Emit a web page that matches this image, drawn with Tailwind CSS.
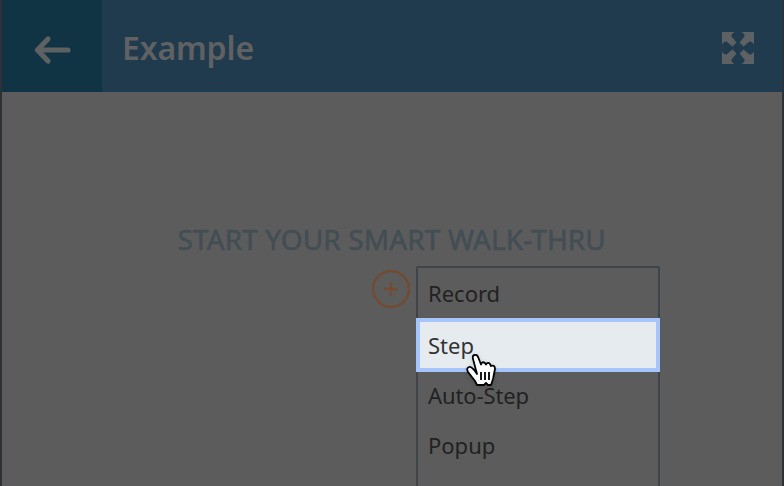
<!DOCTYPE html>
<html lang="en">
<head>
<meta charset="utf-8">
<title>Example</title>
<script src="https://cdn.jsdelivr.net/npm/@tailwindcss/browser@4"></script>
</head>
<body class="font-['Noto_Sans',sans-serif]">
<div class="relative flex h-[486px] w-[784px] flex-col overflow-hidden border-x-2 border-[#2c3237] bg-[#5c5c5c]">
  <header class="flex h-[92px] shrink-0 items-center bg-[#203b4e]">
    <button class="flex h-full w-[100px] items-center justify-center bg-[#103444]" aria-label="Back">
      <svg class="mt-2 h-[30px] w-[38px]" viewBox="0 0 38 30" fill="none" stroke="#5e6162" stroke-width="5.200" stroke-linecap="round" stroke-linejoin="round"><path d="M15 4 4.500 15 15 26M4.500 15h30.500"/></svg>
    </button>
    <h1 class="mt-1 ml-5 text-[32px] leading-none font-semibold tracking-[-0.15px] text-[#606163]">Example</h1>
    <svg class="mt-1 mr-7 ml-auto size-8" viewBox="0 0 32 32" fill="#5e6163"><path d="M0 0h12.500Q9 2 9.500 4.500L14.500 10.500 10.500 14.500 4.500 9.500Q2 9 0 12.500ZM32 0v12.500Q30 9 27.500 9.500L21.500 14.500 17.500 10.500 22.500 4.500Q23 2 19.500 0ZM0 32V19.500Q2 23 4.500 22.500L10.500 17.500 14.500 21.500 9.500 27.500Q9 30 12.500 32ZM32 32H19.500Q23 30 22.500 27.500L17.500 21.500 21.500 17.500 27.500 22.500Q30 23 32 19.500Z"/></svg>
  </header>
  <main class="flex grow flex-col">
    <h2 class="mt-[133px] ml-[175.500px] text-[28px] leading-7 tracking-[0.12px] whitespace-nowrap text-[#424d54] [-webkit-text-stroke:0.5px_#424d54]">START YOUR SMART WALK-THRU</h2>
    <div class="mt-[13px] ml-[369px] flex gap-[5px]">
      <svg class="mt-[3px] size-10 shrink-0" viewBox="0 0 40 40" fill="none" stroke="#724b33" stroke-width="2.500"><circle cx="20" cy="20" r="18"/><path d="M20 13v14M13 20h14"/></svg>
      <ul class="h-[260px] w-[244px] rounded-t-xs border-2 border-[#3d454b] text-[22px] leading-[48px] text-[#222]">
        <li class="h-[50px] pt-px pl-[10px]">Record</li>
        <li class="-mx-0.5 h-[54px] border-4 border-[#a6c5fc] bg-[#e6ebef] pl-2 leading-[46px] text-[#333]">Step</li>
        <li class="h-[50px] pl-[10px] leading-[46px] tracking-[-0.1px]">Auto-Step</li>
        <li class="h-[50px] pl-[10px] leading-[46px]">Popup</li>
      </ul>
    </div>
  </main>
  <svg class="absolute top-[353px] left-[462px] h-[36px] w-[36px] drop-shadow-sm" viewBox="0 0 36 36" fill="#fff" stroke="#000" stroke-width="1.800" stroke-linejoin="round"><path d="M13 21 9 6Q8 2 11 2 13 1 14.500 5L17 11.500Q18 8 21 10L22 11.500Q24 8.500 26 11L27 13Q31 11.500 31 16L29 26 27 32H24L22 30 20 32H13L11 28 4 19Q2 15 5 14 7 13 11 18Z"/><path d="M17 19v8M21 19v8M25 19v8"/></svg>
</div>
</body>
</html>
